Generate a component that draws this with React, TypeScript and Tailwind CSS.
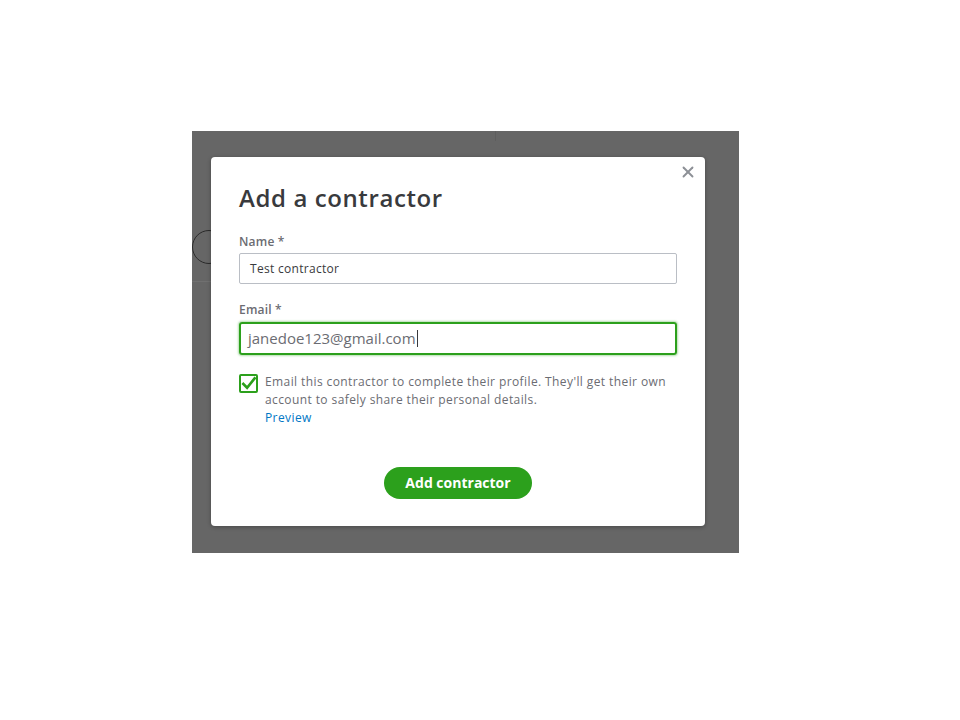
import { X } from 'lucide-react';

export default function App() {
  return (
    <div className="w-[960px] h-[720px] bg-white pl-[192px] pt-[131px] font-['Open_Sans','Noto_Sans',sans-serif]">
      {/* dimmed page behind the dialog */}
      <div className="relative w-[547px] h-[422px] bg-[#666666] overflow-hidden pl-[19px] pt-[26px]">
        <div className="absolute left-[303px] top-0 w-px h-[10px] bg-[#5e5e5e]" />
        <div className="absolute left-0 top-[99px] w-[34px] h-[34px] rounded-full border border-[#2a2a2a]" />
        <div className="absolute left-0 top-[150px] w-[20px] h-px bg-[#707070]" />

        {/* dialog */}
        <div className="relative w-[494px] h-[369px] bg-white rounded-[4px] shadow-[0_1px_4px_rgba(0,0,0,0.3)] px-[28px] pt-[25px]">
          <button className="absolute right-[8px] top-[6px] text-[#8d9096]">
            <X className="w-[18px] h-[18px]" strokeWidth={2.5} />
          </button>

          <h2 className="text-[24px] leading-[32px] text-[#393a3d] font-semibold tracking-[0.6px]">Add a contractor</h2>

          <div className="mt-[20px] text-[12px] leading-[16px] font-semibold text-[#6b6c72] tracking-[0.2px]">Name *</div>
          <div className="mt-[3px] h-[31px] border border-[#babec5] rounded-[2px] flex items-center px-[10px] text-[12px] text-[#393a3d] tracking-[0.3px]">
            Test contractor
          </div>

          <div className="mt-[18px] text-[12px] leading-[16px] font-semibold text-[#6b6c72] tracking-[0.2px]">Email *</div>
          <div className="mt-[4px] h-[33px] border-2 border-[#2ca01c] rounded-[3px] shadow-[0_0_2px_1px_rgba(44,160,28,0.35)] flex items-center px-[7px] text-[15px] text-[#6b6c72]">
            janedoe123@gmail.com
            <span className="w-px h-[17px] bg-[#393a3d] ml-px" />
          </div>

          <div className="mt-[19px] flex gap-[7px]">
            <div className="w-[19px] h-[19px] border-2 border-[#2ca01c] rounded-[2px] flex items-center justify-center shrink-0">
              <svg viewBox="0 0 16 16" className="w-[17px] h-[17px]">
                <path d="M2.5 8.5 L6.5 12.5 L14.5 2.5" fill="none" stroke="#2ca01c" strokeWidth="2.8" strokeLinecap="square" />
              </svg>
            </div>
            <div className="text-[12px] leading-[18px] text-[#6b6c72] tracking-[0.4px] -mt-[1px] pr-[4px]">
              <p>Email this contractor to complete their profile. They&apos;ll get their own account to safely share their personal details.</p>
              <p className="text-[#0077c5]">Preview</p>
            </div>
          </div>

          <div className="mt-[40px] flex justify-center">
            <button className="w-[148px] h-[32px] rounded-full bg-[#2ca01c] text-white text-[14px] leading-[32px] font-bold">
              Add contractor
            </button>
          </div>
        </div>
      </div>
    </div>
  );
}
